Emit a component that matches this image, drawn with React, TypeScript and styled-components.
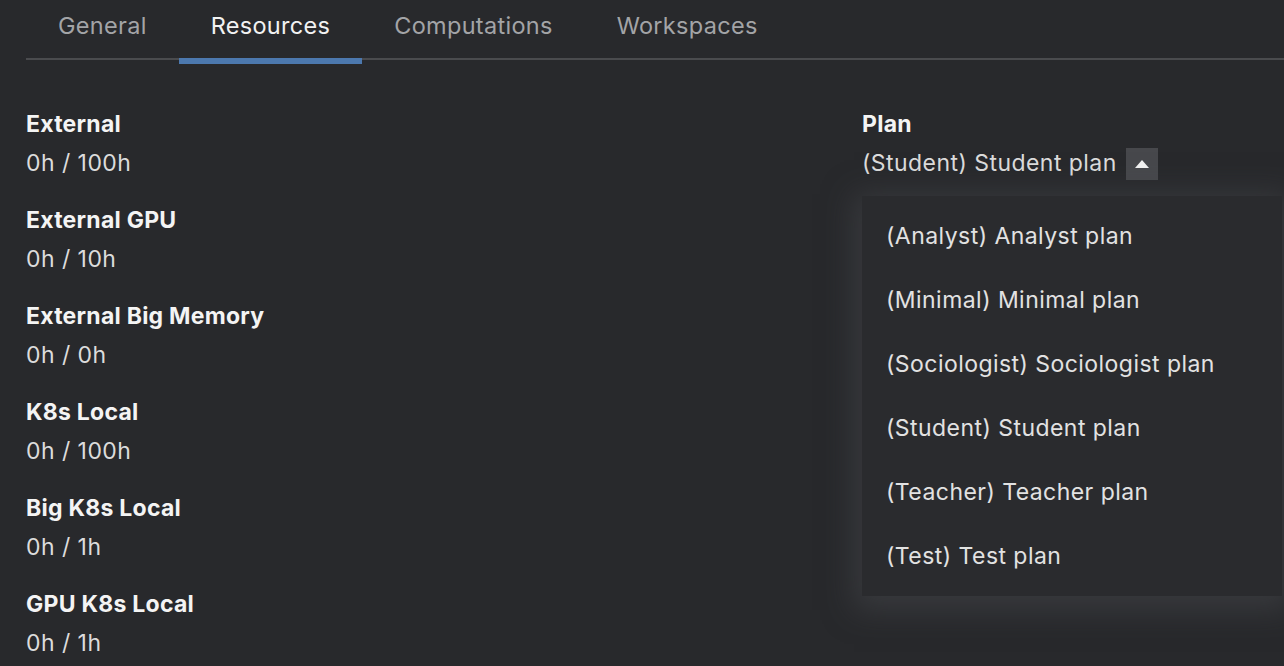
import React, { useState } from "react";
import styled, { createGlobalStyle } from "styled-components";

const Global = createGlobalStyle`
  html, body { margin: 0; padding: 0; background: #28292c; }
  body { font-family: Inter, "Noto Sans", sans-serif; -webkit-font-smoothing: antialiased; }
  * { box-sizing: border-box; }
`;

const Page = styled.div`
  width: 1284px;
  height: 666px;
  overflow: hidden;
  background: #28292c;
  padding-left: 26px;
`;

const TabBar = styled.div`
  display: flex;
  border-bottom: 2px solid #4a4b4e;
  height: 60px;
`;

const Tab = styled.div<{ $active?: boolean }>`
  position: relative;
  padding: 0 32px 8px;
  height: 58px;
  display: flex;
  align-items: center;
  font-size: 23.5px;
  letter-spacing: 0.3px;
  color: ${(p) => (p.$active ? "#f2f2f2" : "#a3a4a7")};
  &::after {
    content: "";
    display: ${(p) => (p.$active ? "block" : "none")};
    position: absolute;
    left: 0;
    right: 0;
    bottom: -6px;
    height: 6px;
    background: #4c78ae;
  }
`;

const Content = styled.div`
  display: grid;
  grid-template-columns: 836px 1fr;
  padding-top: 45px;
`;

const Column = styled.div`
  display: flex;
  flex-direction: column;
  gap: 18px;
`;

const Field = styled.div`
  display: flex;
  flex-direction: column;
`;

const Label = styled.div`
  font-size: 23px;
  font-weight: 700;
  line-height: 38px;
  letter-spacing: 0.25px;
  color: #f4f4f4;
`;

const Value = styled.div`
  font-size: 23px;
  line-height: 40px;
  letter-spacing: 0.45px;
  color: #dcdcdc;
`;

const SelectWrap = styled.div`
  position: relative;
  display: flex;
  align-items: center;
  gap: 9px;
`;

const ToggleBtn = styled.div`
  width: 32px;
  height: 32px;
  margin-top: 2px;
  background: #47484c;
  display: flex;
  align-items: center;
  justify-content: center;
`;

const Menu = styled.div`
  position: absolute;
  top: 53px;
  left: 0;
  width: 420px;
  padding: 8px 0;
  background: #2a2b2e;
  box-shadow: 0 6px 28px 8px rgba(72, 74, 78, 0.5);
  z-index: 2;
`;

const MenuItem = styled.div`
  height: 64px;
  display: flex;
  align-items: center;
  padding-left: 24px;
  font-size: 23px;
  letter-spacing: 0.45px;
  color: #e2e2e2;
`;

const resources = [
  ["External", "0h / 100h"],
  ["External GPU", "0h / 10h"],
  ["External Big Memory", "0h / 0h"],
  ["K8s Local", "0h / 100h"],
  ["Big K8s Local", "0h / 1h"],
  ["GPU K8s Local", "0h / 1h"],
];

const plans = [
  "(Analyst) Analyst plan",
  "(Minimal) Minimal plan",
  "(Sociologist) Sociologist plan",
  "(Student) Student plan",
  "(Teacher) Teacher plan",
  "(Test) Test plan",
];

export default function App() {
  const [active] = useState("Resources");
  return (
    <Page>
      <Global />
      <TabBar>
        {["General", "Resources", "Computations", "Workspaces"].map((t) => (
          <Tab key={t} $active={t === active}>
            {t}
          </Tab>
        ))}
      </TabBar>
      <Content>
        <Column>
          {resources.map(([l, v]) => (
            <Field key={l}>
              <Label>{l}</Label>
              <Value>{v}</Value>
            </Field>
          ))}
        </Column>
        <Column>
          <Field>
            <Label>Plan</Label>
            <SelectWrap>
              <Value>(Student) Student plan</Value>
              <ToggleBtn>
                <svg width="14" height="8" viewBox="0 0 14 8">
                  <path d="M0 8 L7 0 L14 8 Z" fill="#f2f2f2" />
                </svg>
              </ToggleBtn>
              <Menu>
                {plans.map((p) => (
                  <MenuItem key={p}>{p}</MenuItem>
                ))}
              </Menu>
            </SelectWrap>
          </Field>
        </Column>
      </Content>
    </Page>
  );
}
